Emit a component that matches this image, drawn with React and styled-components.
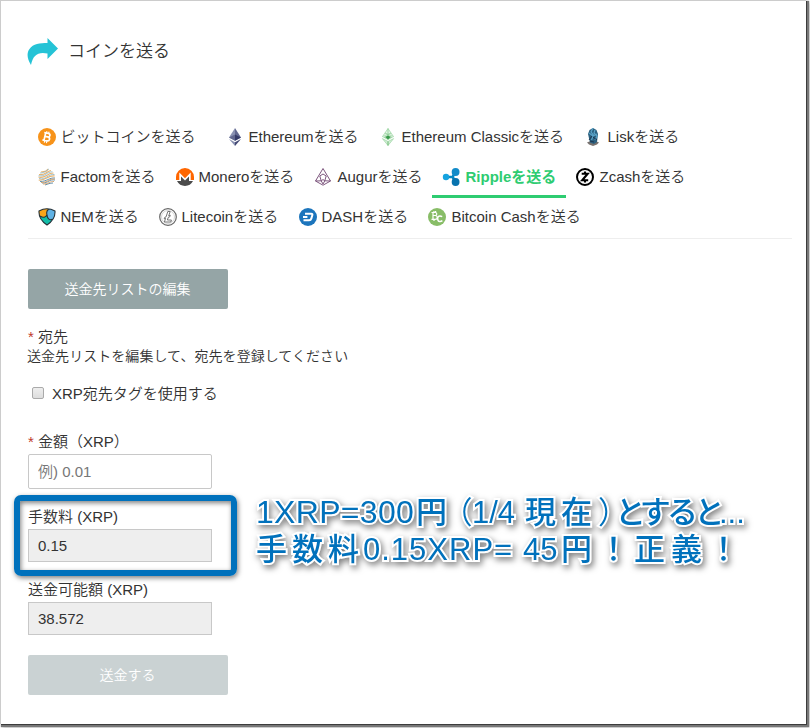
import React from 'react';
import styled, { createGlobalStyle, css } from 'styled-components';

const GlobalStyle = createGlobalStyle`
  * { box-sizing: border-box; }
  body {
    margin: 0;
    min-height: 728px;
    background: #fff;
    color: #333;
    font: 350 15px/20px "Liberation Sans", "Noto Sans CJK JP", sans-serif;
  }
`;

const Page = styled.main`
  position: relative;
  width: 806px;
  height: 724px;
  padding: 32px 14px 0 27px;
  border: solid #ccc;
  border-width: 1px 0 0 1px;
  background: #fff;
  box-shadow: 1px 1px 0 #3c3c3c, 2px 2px 1px 1px #777, 3px 3px 3px #aaa;
`;

const Heading = styled.h1`
  display: flex;
  align-items: center;
  gap: 10px;
  height: 38px;
  margin: 0 0 47px -1px;
  font-size: 17px;
  font-weight: 350;
`;

const Tabs = styled.nav`
  width: 764px;
  height: 121px;
  border-bottom: 1px solid #eee;
`;

const TabRow = styled.div`
  display: flex;
  height: 40px;
`;

const Tab = styled.a`
  display: flex;
  flex: none;
  align-items: center;
  gap: ${(p) => p.$gap || 4.5}px;
  width: ${(p) => p.$width}px;
  padding: 0 0 2px 10px;
  white-space: nowrap;
  ${(p) => p.$active && css`
    padding: 1px 0 0 10px;
    color: #2ecc71;
    font-weight: 700;
    border-bottom: 3px solid #2ecc71;
  `}
  svg { flex: none; }
`;

const Button = styled.button`
  display: block;
  width: 200px;
  height: 40px;
  padding: 0 1px 0 0;
  border: 0;
  border-radius: 2px;
  background: ${(p) => (p.disabled ? '#cad2d3' : '#95a5a6')};
  color: #fff;
  font: inherit;
  font-size: 14px;
`;

const Form = styled.form`
  padding-top: 30px;
`;

const Label = styled.label`
  display: block;
  height: 20px;
  white-space: pre;
`;

const Required = styled.span`
  color: #c0392b;
`;

const Recipient = styled.div`
  margin-top: 18px;
`;

const Note = styled.p`
  margin: -1px 0 0 -1px;
  font-size: 14px;
  letter-spacing: 0.05px;
`;

const CheckRow = styled.label`
  display: flex;
  align-items: center;
  gap: 8px;
  height: 20px;
  margin: 18px 0 28px 4px;
`;

const Checkbox = styled.input`
  appearance: none;
  width: 12px;
  height: 12px;
  margin: -3px 0 0;
  border: 1px solid #aaa;
  border-radius: 2px;
  background: linear-gradient(#eee, #ddd);
`;

const Field = styled.div`
  height: ${(p) => p.$height}px;
`;

const Input = styled.input`
  display: block;
  width: 184px;
  height: ${(p) => (p.readOnly ? 33 : 35)}px;
  margin-top: 2px;
  padding: 0 9px;
  border: 1px solid #c8c8c8;
  border-radius: ${(p) => (p.readOnly ? 0 : 2)}px;
  background: ${(p) => (p.readOnly ? '#eee' : '#fff')};
  color: #333;
  font: inherit;
  &::placeholder { color: #777; opacity: 1; }
`;

const Highlight = styled.div`
  position: absolute;
  left: 13px;
  top: 494px;
  width: 223px;
  height: 81px;
  border: 6px solid #0071bc;
  border-radius: 7px;
  box-shadow: 1px 2px 5px rgba(0, 0, 0, .5), inset 1px 2px 5px rgba(0, 0, 0, .5);
`;

const Callout = styled.div`
  position: absolute;
  left: 255px;
  top: 493px;
  color: #0071bc;
  font-size: 31px;
  font-weight: 500;
  line-height: 37px;
  filter: drop-shadow(2px 3px 3px rgba(0, 0, 0, .5));
`;

const CalloutLine = styled.div`
  display: flex;
  height: 37px;
  white-space: pre;
`;

const Phrase = styled.span`
  flex: none;
  width: ${(p) => p.$width}px;
  font-size: ${(p) => p.$size || 31}px;
  letter-spacing: ${(p) => p.$track || 0}px;
  font-feature-settings: ${(p) => (p.$tight ? '"palt"' : 'normal')};
  font-weight: ${(p) => (p.$thin ? 350 : 500)};
  -webkit-text-stroke: 4px #fff;
  paint-order: stroke fill;
`;

const Icon = ({ children }) => (
  <svg width="18" height="18" viewBox="0 0 18 18" fill="none">{children}</svg>
);

const Bitcoin = () => (
  <Icon>
    <circle cx="9" cy="9" r="9" fill="#f7931a" />
    <g transform="rotate(13 9 9)" stroke="#fff" strokeWidth="1.7">
      <path d="M6.8 5v8M5.3 5.2h4.2c2.7 0 2.7 3.6 0 3.6H7m2.6 0c3.2 0 3.2 4 0 4H5.2" />
      <path d="M7.6 3.2v2M9.8 3.2v2M7.6 13v2M9.8 13v2" strokeWidth="1.1" />
    </g>
  </Icon>
);
const Ethereum = () => (
  <Icon>
    <path d="M9 0 3 9.4 9 12.8Z" fill="#8a92b2" /><path d="m9 0 6 9.4-6 3.4Z" fill="#62688f" />
    <path d="m3 9.4 6-2.8v6.2Z" fill="#62688f" /><path d="m15 9.4-6-2.8v6.2Z" fill="#353b68" />
    <path d="m3 11 6 3.3V18Z" fill="#8a92b2" /><path d="m15 11-6 3.3V18Z" fill="#454a75" />
  </Icon>
);
const EthereumClassic = () => (
  <Icon>
    <path d="M9 .5 3.4 8.7 9 6.2l5.6 2.5Z" fill="#e3f5e5" stroke="#9ad4a0" strokeWidth=".7" />
    <path d="m4 9.3 5-2.6 5 2.6L9 12Z" fill="#a5d8aa" /><path d="m6.5 9 2.5-1.6L11.500 9 9 11.500Z" fill="#38994a" />
    <path d="M9 .5v6M6 5l3 1.500L12 5" stroke="#80c888" strokeWidth=".7" />
    <path d="m3.4 10.600 5.600 2.900 5.600-2.900L9 17.500Z" fill="#d5efd8" stroke="#9ad4a0" strokeWidth=".7" /><path d="M9 13.500v4" stroke="#69b76f" />
  </Icon>
);
const Lisk = () => (
  <Icon>
    <path d="m3 14.500 6-2.500 6 2.500-2 2-4 1.500-4-1.500Z" fill="#77716e" />
    <path d="m9 0 3.500 2 1.500 4-1 8-3 2-4-1.500L4 6l1.500-4Z" fill="#2b607f" />
    <path d="M9 0 7 4l2.500 3-2 5M11 2l-1 3 3 3-2 4M5 5l4 3 4-2" stroke="#5aa3c8" strokeWidth="1.2" />
    <path d="m8 8-3 4m4-3 4 3m-7 1 4 1" stroke="#1b3550" />
  </Icon>
);
const Factom = () => (
  <Icon>
    <path d="M3 4c3-1 5 1 7-3M1 6.5c6 1 7-3 12-4M.5 9c7 2 8-4 15-4M.7 12c7 1 9-5 16-4" stroke="#e8b36e" strokeWidth="1.2" />
    <path d="M2 5c5 0 7-3 9-4M.5 7.8c7 1 8-4 14-4M1 10.5c7 2 9-5 15.5-4" stroke="#95bbc9" strokeWidth=".9" />
    <path d="M2 13.5c7 0 9-4 15-3.5M4 15c7 0 7-4 13-3M7 17c3-1 5-2 8-2" stroke="#6291af" strokeWidth="1" />
    <path d="M3 14.5c7 0 8-4 14-3.5M5 16c6 0 7-3 11-2.5" stroke="#d7a671" strokeWidth="1" />
  </Icon>
);
const Monero = () => (
  <Icon>
    <path d="M0 12V9a9 9 0 0 1 18 0v3h-3.3V4.5L9 10.2 3.3 4.5V12Z" fill="#ff6600" />
    <path d="M1 13h4V8.5l4 4 4-4V13h4a9 9 0 0 1-16 0Z" fill="#4c4c4c" />
  </Icon>
);
const Augur = () => (
  <Icon>
    <path d="M9 .5 1.5 13 9 17.2l7.5-4.2ZM9 6 5.800 8l1.500 5L9 16l1.700-3 1.500-5ZM1.500 13l5.800-.2L9 11.500l1.700 1.300 5.800.2" stroke="#764d77" strokeWidth=".95" strokeLinejoin="round" />
  </Icon>
);
const Ripple = () => (
  <Icon>
    <path d="M4 9h7M10.5 8.5c2-1 1-3 3-4.5M10.5 9.5c2 1 1 3 3 4.5" stroke="#0788c3" strokeWidth="2.600" />
    <circle cx="4" cy="9" r="3.200" fill="#16a3df" /><circle cx="13.6" cy="4" r="3.9" fill="#128bc9" /><circle cx="13.6" cy="14" r="3.9" fill="#0873ae" />
  </Icon>
);
const Zcash = () => (
  <Icon>
    <circle cx="9" cy="9" r="8" fill="#fff" stroke="#000" strokeWidth="2" />
    <path d="M5.7 5.7h6L6.2 12.3h6M9 3.5v3M9 11.5v3" stroke="#000" strokeWidth="2.1" />
  </Icon>
);
const Nem = () => (
  <Icon>
    <path d="M1 3Q9-1.5 17 3q.6 8.5-8 14Q.4 11.5 1 3Z" fill="#60b2e5" />
    <path d="M1 3Q6 0 11 .9 7.8 2.7 9 6.8 7 11 2 8Q.8 6 1 3Z" fill="#f9a51a" />
    <path d="M2 8q5 3 7-1.2c.2 4.5 3 5.6 5.4 4.5Q12.5 15 9 17 3.5 13.5 2 8Z" fill="#12bda8" />
    <path d="M1 3Q9-1.5 17 3q.6 8.5-8 14Q.4 11.5 1 3ZM11 .9Q7.8 2.7 9 6.8 7 11 2 8m7-1.2c.2 4.5 3 5.6 5.4 4.5" stroke="#263239" strokeWidth="1.1" />
  </Icon>
);
const Litecoin = () => (
  <Icon>
    <circle cx="9" cy="9" r="8.3" fill="#fff" stroke="#666" strokeWidth="1.2" /><circle cx="9" cy="9" r="6.5" stroke="#bbb" strokeWidth=".6" />
    <path d="M8.8 3.5h2.4L9.7 8l1.6-.7-.4 1.4-1.7.8-.8 2.5h4l-.5 2H5.4l1.2-3.7-1.4.6.4-1.4 1.5-.7Z" fill="#fff" stroke="#666" strokeWidth=".9" />
  </Icon>
);
const Dash = () => (
  <Icon>
    <circle cx="9" cy="9" r="9" fill="#1c75bc" />
    <path d="M6 5.7h6.2q1.6 0 1.1 1.6l-1 3.3q-.5 1.7-2.2 1.7H4.5M4 9h4.4" stroke="#fff" strokeWidth="2" />
  </Icon>
);
const BitcoinCash = () => (
  <Icon>
    <circle cx="9" cy="9" r="9" fill="#88bd67" />
    <path d="M5 4v8M3.5 4.5h3.8c2 0 2 3 0 3H5m2 0c3 0 3 3.8 0 3.8H3.5M6 3v2M7.6 3v2M6 11v2" stroke="#fff" strokeWidth="1.2" />
    <path d="M14.2 8.7c-3.2-2-5.2.3-4.4 3 .6 2.3 2.8 2.4 4.6 1" stroke="#fff" strokeWidth="1.5" />
  </Icon>
);

const tabRows = [
  [
    { icon: Bitcoin, text: 'ビットコインを送る', width: 188 },
    { icon: Ethereum, text: 'Ethereumを送る', width: 153 },
    { icon: EthereumClassic, text: 'Ethereum Classicを送る', width: 205 },
    { icon: Lisk, text: 'Liskを送る', width: 120, gap: 5.5 },
  ],
  [
    { icon: Factom, text: 'Factomを送る', width: 138 },
    { icon: Monero, text: 'Moneroを送る', width: 138 },
    { icon: Augur, text: 'Augurを送る', width: 128, gap: 5.5 },
    { icon: Ripple, text: 'Rippleを送る', width: 134, active: true, gap: 5.5 },
    { icon: Zcash, text: 'Zcashを送る', width: 130, gap: 5.5 },
  ],
  [
    { icon: Nem, text: 'NEMを送る', width: 121 },
    { icon: Litecoin, text: 'Litecoinを送る', width: 140 },
    { icon: Dash, text: 'DASHを送る', width: 129 },
    { icon: BitcoinCash, text: 'Bitcoin Cashを送る', width: 160, gap: 5.5 },
  ],
];

export default function App() {
  return (
    <>
      <GlobalStyle />
      <Page>
        <Heading>
          <svg width="31" height="28" viewBox="0 0 31 28">
            <path d="M20.500 0 31 10.500 20.500 21v-5.500C11 13.500 6 17 4 27 0 21-.5 15 2.500 11 6 5.500 13 5 20.500 5Z" fill="#25c3d6" />
          </svg>
          コインを送る
        </Heading>
        <Tabs>
          {tabRows.map((row, i) => (
            <TabRow key={i}>
              {row.map(({ icon: Glyph, text, width, active, gap }) => (
                <Tab key={text} $width={width} $active={active} $gap={gap}><Glyph />{text}</Tab>
              ))}
            </TabRow>
          ))}
        </Tabs>
        <Form>
          <Button type="button">送金先リストの編集</Button>
          <Recipient>
            <Label><Required>*</Required> 宛先</Label>
            <Note>送金先リストを編集して、宛先を登録してください</Note>
          </Recipient>
          <CheckRow><Checkbox type="checkbox" />XRP宛先タグを使用する</CheckRow>
          <Field $height={75}>
            <Label><Required>*</Required> 金額（XRP）</Label>
            <Input placeholder="例) 0.01" />
          </Field>
          <Field $height={73}>
            <Label>手数料 (XRP)</Label>
            <Input readOnly value="0.15" />
          </Field>
          <Field $height={75}>
            <Label>送金可能額 (XRP)</Label>
            <Input readOnly value="38.572" />
          </Field>
          <Button type="button" disabled>送金する</Button>
        </Form>
        <Highlight />
        <Callout>
          <CalloutLine>
            <Phrase $width={160} $size={32} $track={0.3}>1XRP=300</Phrase>
            <Phrase $width={40}>円</Phrase>
            <Phrase $width={16} $tight $thin>（</Phrase>
            <Phrase $width={53}>1/4</Phrase>
            <Phrase $width={74} $track={5}>現在</Phrase>
            <Phrase $width={17} $tight $thin>）</Phrase>
            <Phrase $width={103} $tight $track={-1}>とすると</Phrase>
            <Phrase $width={30}>...</Phrase>
          </CalloutLine>
          <CalloutLine>
            <Phrase $width={107} $track={5}>手数料</Phrase>
            <Phrase $width={160} $track={1}>0.15XRP=</Phrase>
            <Phrase $width={38}>45</Phrase>
            <Phrase $width={37}>円</Phrase>
            <Phrase $width={36}>！</Phrase>
            <Phrase $width={74} $track={6}>正義</Phrase>
            <Phrase $width={32}>！</Phrase>
          </CalloutLine>
        </Callout>
      </Page>
    </>
  );
}
